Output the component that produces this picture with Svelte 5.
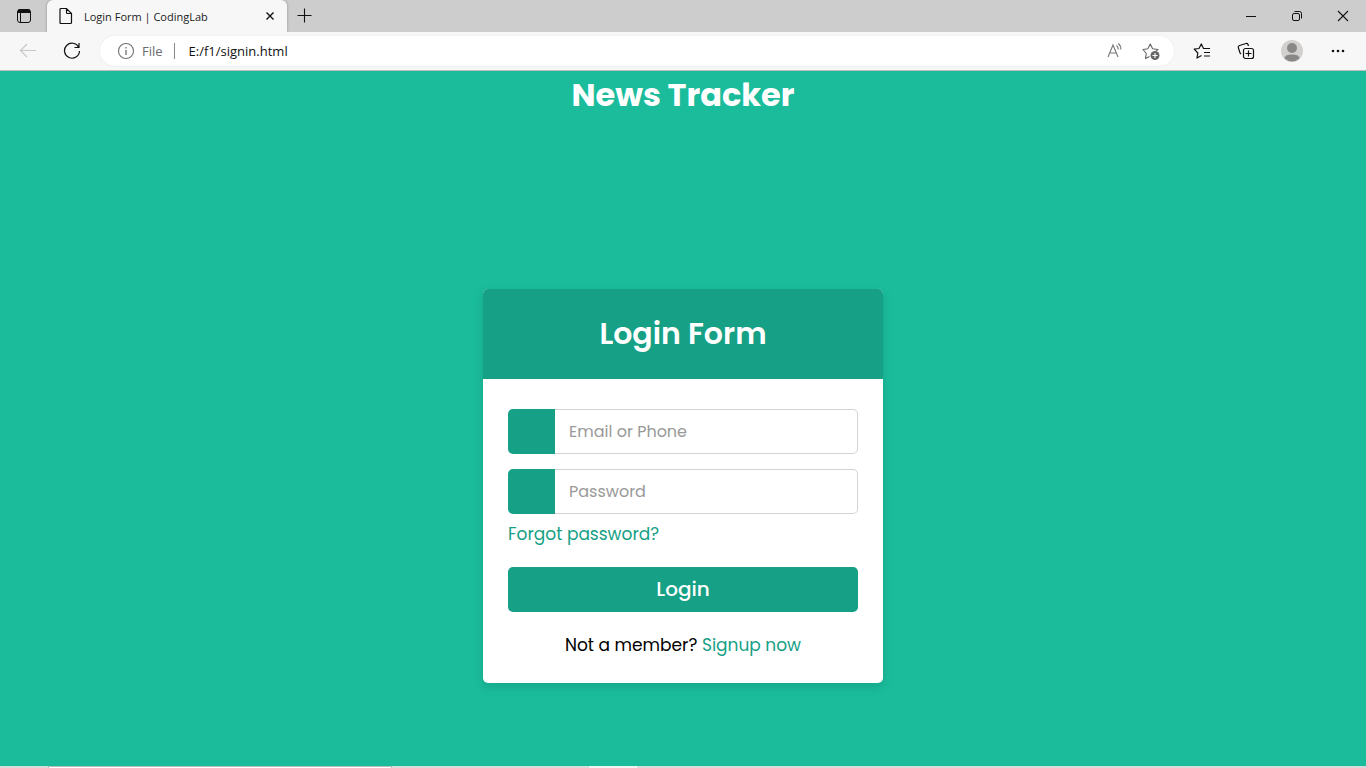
<script>
  let email = $state('');
  let password = $state('');
</script>

<div class="window">
  <header class="tabs">
    <button class="icon workspace" aria-label="Tab actions">
      <svg width="16" height="16" viewBox="0 0 16 16" fill="none" stroke="#111">
        <rect x="1.5" y="1.5" width="13" height="13" rx="2.5" />
        <path d="M2 2.5h12M1.5 4h13" stroke-width="2" />
        <path d="M4.5 4v10.5" />
      </svg>
    </button>
    <div class="tab">
      <svg width="16" height="18" viewBox="0 0 16 18" fill="none" stroke="#111" stroke-width="1.2">
        <path d="M3 1.5h5.5L13.5 6.5v9q0 1-1 1H3q-1 0-1-1v-13q0-1 1-1zM8.500 1.500v4q0 1 1 1h4" />
      </svg>
      <span class="title">Login Form | CodingLab</span>
      <button class="icon" aria-label="Close tab">
        <svg width="10" height="10" viewBox="0 0 10 10" stroke="#111" stroke-width="1.400"><path d="M1.500 1.500l7 7M8.500 1.500l-7 7" /></svg>
      </button>
    </div>
    <button class="icon add" aria-label="New tab">
      <svg width="16" height="16" viewBox="0 0 16 16" stroke="#111" stroke-width="1.100"><path d="M.5 7.500h14M7.500 .5v14" /></svg>
    </button>
    <div class="controls">
      <button class="icon" aria-label="Minimize">
        <svg width="12" height="12" viewBox="0 0 12 12" stroke="#111"><path d="M1 6.500h10" /></svg>
      </button>
      <button class="icon" aria-label="Restore">
        <svg width="12" height="12" viewBox="0 0 12 12" fill="none" stroke="#111">
          <rect x="1.500" y="3.500" width="7" height="7" rx="1.500" />
          <path d="M3.500 1.500h5q2 0 2 2v5" />
        </svg>
      </button>
      <button class="icon" aria-label="Close window">
        <svg width="12" height="12" viewBox="0 0 12 12" stroke="#111" stroke-width="1.100"><path d="M1 1l10 10M11 1l-10 10" /></svg>
      </button>
    </div>
  </header>

  <nav class="toolbar" aria-label="Browser toolbar">
    <button class="icon" aria-label="Back" disabled>
      <svg width="18" height="16" viewBox="0 0 18 16" fill="none" stroke="#c8c8c8" stroke-width="1.200"><path d="M17 7.500H1.500M8 1L1.500 7.500 8 14" /></svg>
    </button>
    <button class="icon" aria-label="Refresh">
      <svg width="18" height="18" viewBox="0 0 18 18" fill="none" stroke="#111" stroke-width="1.200">
        <path d="M15.800 5.500A7.500 7.500 0 1 0 16.500 9M16 1v4.500h-4.500" />
      </svg>
    </button>
    <div class="address">
      <svg width="18" height="18" viewBox="0 0 18 18" fill="none" stroke="#707070" stroke-width="1.100">
        <circle cx="9" cy="9" r="7.500" /><path d="M9 8v5M9 5v1.500" stroke-width="1.300" />
      </svg>
      <span class="scheme">File</span>
      <span class="divider"></span>
      <input class="url" aria-label="Address" value="E:/f1/signin.html" />
      <button class="icon" aria-label="Read aloud">
        <svg width="18" height="18" viewBox="0 0 18 18" fill="none" stroke="#777" stroke-width="1.100">
          <path d="M2 15L7 3l5 12M3.700 11h6.600" />
          <path d="M10.500 3.500q2 1.500 1.700 4M12.300 1.500q3 2.500 2.500 6" />
        </svg>
      </button>
      <button class="icon" aria-label="Add to favorites">
        <svg width="18" height="18" viewBox="0 0 18 18" fill="none" stroke="#666" stroke-width="1.100" stroke-linejoin="round">
          <path d="M7.500 14.500l-4 2 .8-5L1 7.500l4.800-.7L8.300 2l2.300 4.800 5.400.7-2 1.500" />
          <circle cx="13" cy="13.500" r="4.500" fill="#666" stroke="none" />
          <path d="M13 11v5M10.500 13.500h5" stroke="#fff" />
        </svg>
      </button>
    </div>
    <div class="actions">
      <button class="icon" aria-label="Favorites">
        <svg width="18" height="18" viewBox="0 0 18 18" fill="none" stroke="#111" stroke-width="1.200" stroke-linejoin="round">
          <path d="M8.500 13.500L4 16l.8-5L1.200 7.200 6 6.500 8.300 2l2.200 4.500h6.500M11 10.500h6M11 14h6" />
        </svg>
      </button>
      <button class="icon" aria-label="Collections">
        <svg width="18" height="18" viewBox="0 0 18 18" fill="none" stroke="#111" stroke-width="1.200">
          <path d="M4 12L3 11 1.300 5.500Q1 4 2.500 3.500L9 1.500q1.500-.4 2 1L11.500 4" />
          <rect x="6.500" y="6.500" width="10" height="10" rx="2" />
          <path d="M11.500 8.500v6M8.500 11.500h6" />
        </svg>
      </button>
      <button class="icon" aria-label="Profile">
        <svg width="22" height="22" viewBox="0 0 22 22">
          <circle cx="11" cy="11" r="11" fill="#d2d0ce" />
          <circle cx="11" cy="8" r="5" fill="#8a8886" />
          <path d="M3.500 18.500q0-4 7.500-4t7.500 4A11 11 0 0 1 3.500 18.500z" fill="#8a8886" />
        </svg>
      </button>
      <button class="icon" aria-label="Settings and more">
        <svg width="18" height="4" viewBox="0 0 18 4" fill="#111"><circle cx="4" cy="2" r="1.300" /><circle cx="9" cy="2" r="1.300" /><circle cx="14" cy="2" r="1.300" /></svg>
      </button>
    </div>
  </nav>

  <main>
    <h1>News Tracker</h1>
    <div class="stage">
      <section class="card">
        <h2>Login Form</h2>
        <form onsubmit={(e) => e.preventDefault()}>
          <div class="row">
            <label for="email" aria-label="Email or Phone"></label>
            <input id="email" type="text" placeholder="Email or Phone" bind:value={email} />
          </div>
          <div class="row">
            <label for="password" aria-label="Password"></label>
            <input id="password" type="password" placeholder="Password" bind:value={password} />
          </div>
          <a class="forgot" href="#forgot">Forgot password?</a>
          <button class="submit" type="submit">Login</button>
          <p>Not a member? <a href="#signup">Signup now</a></p>
        </form>
      </section>
    </div>
  </main>

  <footer class="taskbar"><span class="search"></span><span class="running"></span></footer>
</div>

<style>
  :global(body) { margin: 0; }
  * { box-sizing: border-box; }
  .window {
    display: flex;
    flex-direction: column;
    min-height: 100vh;
    font-family: Poppins, Inter, sans-serif;
    background: #1abc9c;
  }
  .icon {
    display: flex;
    align-items: center;
    justify-content: center;
    padding: 0;
    border: 0;
    background: none;
  }
  .tabs, .toolbar {
    display: flex;
    align-items: center;
    font-family: "Segoe UI", "Open Sans", sans-serif;
  }
  .tabs { height: 32px; background: #cdcdcd; }
  .workspace { width: 47px; }
  .tab {
    display: flex;
    align-items: center;
    gap: 10px;
    width: 240px;
    height: 32px;
    padding: 0 12px 0 11px;
    border-radius: 6px 6px 0 0;
    background: #f7f7f7;
    box-shadow: 0 0 3px rgba(0, 0, 0, 0.3);
    clip-path: inset(0 -4px 0 -4px);
    font-size: 11px;
    color: #1b1b1b;
  }
  .title { flex: 1; white-space: nowrap; }
  .add { width: 36px; }
  .controls { display: flex; margin-left: auto; }
  .controls .icon { width: 46px; height: 32px; }
  .toolbar {
    height: 39px;
    border-bottom: 1px solid #bdbdbd;
    background: #f7f7f7;
    gap: 26px;
    padding: 0 19px;
    font-size: 13px;
  }
  .address {
    display: flex;
    flex: 1;
    align-items: center;
    height: 30px;
    margin-left: -7px;
    padding: 0 14px 0 17px;
    border-radius: 15px;
    background: #fff;
    box-shadow: 0 0 3px rgba(0, 0, 0, 0.06);
  }
  .scheme { margin-left: 7px; color: #6b6b6b; }
  .divider { width: 1px; height: 16px; margin: 0 14px 0 11px; background: #888; }
  .url {
    flex: 1;
    min-width: 0;
    padding: 0;
    border: 0;
    outline: 0;
    background: none;
    font: inherit;
    color: #111;
  }
  .address .icon { margin-left: 18px; }
  .actions { display: flex; align-items: center; gap: 26px; margin-left: -7px; }

  main { display: flex; flex: 1; flex-direction: column; }
  h1 {
    margin: 0;
    font-size: 32px;
    line-height: 48px;
    font-weight: 700;
    text-align: center;
    color: #fff;
  }
  .stage {
    display: flex;
    flex: 1;
    align-items: center;
    justify-content: center;
    padding: 86px 16px 0;
  }
  .card {
    width: 400px;
    max-width: 100%;
    overflow: hidden;
    border-radius: 5px;
    background: #fff;
    box-shadow: 0 4px 10px 1px rgba(0, 0, 0, 0.1);
  }
  h2 {
    margin: 0;
    font-size: 30px;
    line-height: 90px;
    font-weight: 600;
    text-align: center;
    color: #fff;
    background: #16a085;
  }
  form { display: flex; flex-direction: column; padding: 30px 25px 25px; }
  .row { display: flex; height: 45px; margin-bottom: 15px; }
  .row label { width: 47px; border-radius: 5px 0 0 5px; background: #16a085; }
  .row input {
    flex: 1;
    min-width: 0;
    padding: 0 14px;
    border: 1px solid lightgrey;
    border-left: 0;
    border-radius: 0 5px 5px 0;
    outline: 0;
    background: #fff;
    font-family: inherit;
    font-size: 16px;
    color: #000;
  }
  .row input::placeholder { color: #999; opacity: 1; }
  .row input:focus { border-color: #16a085; }
  a { color: #16a085; text-decoration: none; }
  a:hover { text-decoration: underline; }
  .forgot { align-self: flex-start; margin-top: -8px; font-size: 17px; line-height: 26px; }
  .submit {
    height: 45px;
    margin-top: 20px;
    border: 0;
    border-radius: 5px;
    background: #16a085;
    font-family: inherit;
    font-size: 20px;
    font-weight: 500;
    color: #fff;
    cursor: pointer;
  }
  .submit:hover { background: #12876f; }
  p { margin: 20px 0 0; font-size: 17px; line-height: 26px; text-align: center; }
  .taskbar { display: flex; height: 2px; padding-left: 48px; background: #dadada; }
  .search { width: 344px; border: 1px solid #bbb; border-bottom: 0; background: #fff; }
  .running { width: 48px; margin-left: 197px; background: #f3f3f3; }
</style>
